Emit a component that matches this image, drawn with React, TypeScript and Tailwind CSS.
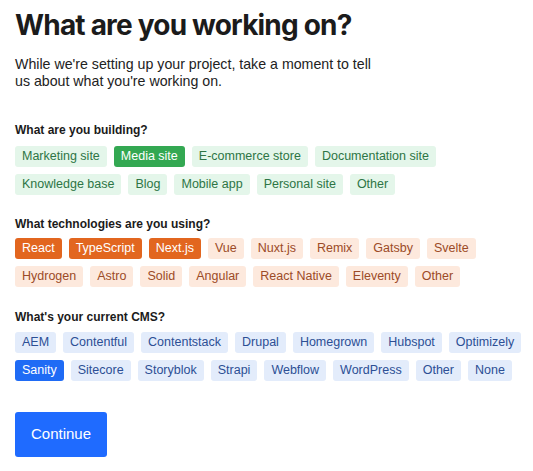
import { useState } from 'react'

type Tone = 'green' | 'orange' | 'blue'

const tones: Record<Tone, { on: string; off: string }> = {
  green: { on: 'bg-[#33a852] text-white', off: 'bg-[#e4f6ea] text-[#2d7545]' },
  orange: { on: 'bg-[#e2661f] text-white', off: 'bg-[#fde9dd] text-[#9c4b27]' },
  blue: { on: 'bg-[#1f6bf5] text-white', off: 'bg-[#e3ecfb] text-[#2c4f95]' },
}

const sections: { label: string; tone: Tone; items: string[]; selected: string[]; gap: string; inner: string }[] = [
  {
    label: 'What are you building?',
    tone: 'green',
    items: ['Marketing site', 'Media site', 'E-commerce store', 'Documentation site', 'Knowledge base', 'Blog', 'Mobile app', 'Personal site', 'Other'],
    selected: ['Media site'],
    gap: 'mt-[33px]',
    inner: 'mt-[8px]',
  },
  {
    label: 'What technologies are you using?',
    tone: 'orange',
    items: ['React', 'TypeScript', 'Next.js', 'Vue', 'Nuxt.js', 'Remix', 'Gatsby', 'Svelte', 'Hydrogen', 'Astro', 'Solid', 'Angular', 'React Native', 'Eleventy', 'Other'],
    selected: ['React', 'TypeScript', 'Next.js'],
    gap: 'mt-[22px]',
    inner: 'mt-[6px]',
  },
  {
    label: "What's your current CMS?",
    tone: 'blue',
    items: ['AEM', 'Contentful', 'Contentstack', 'Drupal', 'Homegrown', 'Hubspot', 'Optimizely', 'Sanity', 'Sitecore', 'Storyblok', 'Strapi', 'Webflow', 'WordPress', 'Other', 'None'],
    selected: ['Sanity'],
    gap: 'mt-[23px]',
    inner: 'mt-[7px]',
  },
]

export default function App() {
  const [picked, setPicked] = useState<string[][]>(sections.map(s => s.selected))

  const toggle = (i: number, item: string) => {
    setPicked(p => p.map((arr, j) => j !== i ? arr : arr.includes(item) ? arr.filter(x => x !== item) : [...arr, item]))
  }

  return (
    <div className="min-h-screen bg-white px-[15px] pt-[6px] font-['Liberation_Sans',Arial,sans-serif] text-[#1b1b1b]">
      <h1 className="font-['Inter',sans-serif] text-[28px] font-bold leading-[38px] tracking-[-0.8px]">What are you working on?</h1>
      <p className="mt-[12px] w-[370px] text-[14.2px] leading-[17px] text-[#222]">
        While we're setting up your project, take a moment to tell us about what you're working on.
      </p>

      {sections.map((s, i) => (
        <div key={s.label} className={s.gap}>
          <p className="text-[12px] font-bold leading-[15px]">{s.label}</p>
          <div className={`${s.inner} flex w-[510px] flex-wrap gap-x-[7px] gap-y-[7px]`}>
            {s.items.map(item => {
              const on = picked[i].includes(item)
              return (
                <button
                  key={item}
                  onClick={() => toggle(i, item)}
                  className={`h-[21px] rounded-[3px] px-[7px] text-[12.5px] leading-[21px] ${on ? tones[s.tone].on : tones[s.tone].off}`}
                >
                  {item}
                </button>
              )
            })}
          </div>
        </div>
      ))}

      <button className="mt-[31px] h-[45px] w-[92px] rounded-[3px] bg-[#1f6bff] text-[15px] text-white">Continue</button>
    </div>
  )
}
